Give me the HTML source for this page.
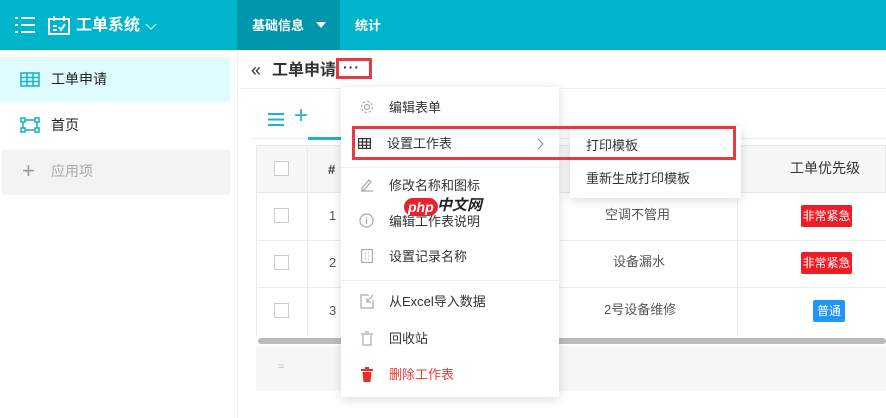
<!DOCTYPE html>
<html><head><meta charset="utf-8"><style>
*{box-sizing:border-box;margin:0;padding:0}
body{width:886px;height:418px;overflow:hidden;background:#fff;font-family:"Liberation Sans","Noto Sans CJK SC",sans-serif;font-size:13px;color:#333;position:relative;line-height:1.2}
.abs{position:absolute}
.hdr{left:0;top:0;width:886px;height:50px;background:#00b5cb}
.tab{left:237px;top:0;width:103px;height:50px;background:#0097ad}
.wt{color:#fff;font-weight:bold}
.side{left:0;top:50px;width:238px;height:368px;border-right:1px solid #eee}
.cb{width:15px;height:15px;border:1px solid #ccc;background:#fff}
.red{border:3px solid #e43a44}
</style></head><body>
<div class="abs hdr"></div>
<div class="abs tab"></div>
<svg class="abs" style="left:15px;top:17px" width="20" height="16"><g fill="#fff"><rect x="0" y="0" width="3" height="2"/><rect x="6" y="0" width="14" height="2"/><rect x="0" y="7" width="3" height="2"/><rect x="6" y="7" width="14" height="2"/><rect x="0" y="14" width="3" height="2"/><rect x="6" y="14" width="14" height="2"/></g></svg>
<svg class="abs" style="left:48px;top:16px" width="22" height="19"><g fill="none" stroke="#fff" stroke-width="2"><rect x="1" y="3" width="20" height="15"/><path d="M6 0v5M16 0v5M5 10h4M5 14h4M11 11l2 3 4-6"/></g></svg>
<div class="abs wt" style="left:76px;top:16px;font-size:16px">工单系统</div>
<svg class="abs" style="left:145px;top:23px" width="12" height="8"><path d="M1 1l5 5 5-5" fill="none" stroke="#bdeef4" stroke-width="1.2"/></svg>
<div class="abs wt" style="left:252px;top:18px;font-size:13px">基础信息</div>
<svg class="abs" style="left:316px;top:22px" width="10" height="6"><path d="M0 0h10L5 6z" fill="#fff"/></svg>
<div class="abs wt" style="left:355px;top:18px;font-size:13px">统计</div>
<div class="abs side"></div>
<div class="abs" style="left:0;top:57px;width:230px;height:45px;background:#e0fbfd"></div>
<svg class="abs" style="left:20px;top:72px" width="20" height="15"><g fill="none" stroke="#1fb5c7" stroke-width="1.6"><rect x="1" y="1" width="18" height="13"/><path d="M1 5.5h18M1 9.5h18M7 1v13M13 1v13"/></g></svg>
<div class="abs" style="left:51px;top:71px;font-size:14px;color:#222">工单申请</div>
<svg class="abs" style="left:20px;top:117px" width="20" height="16"><g fill="none" stroke="#1fb5c7" stroke-width="1.6"><rect x="3" y="3" width="14" height="10"/><rect x="1" y="1" width="4" height="4" fill="#fff"/><rect x="15" y="1" width="4" height="4" fill="#fff"/><rect x="1" y="11" width="4" height="4" fill="#fff"/><rect x="15" y="11" width="4" height="4" fill="#fff"/></g></svg>
<div class="abs" style="left:51px;top:117px;font-size:14px;color:#222">首页</div>
<div class="abs" style="left:2px;top:150px;width:228px;height:45px;background:#f3f3f3"></div>
<div class="abs" style="left:22px;top:160px;font-size:22px;color:#999;line-height:22px">+</div>
<div class="abs" style="left:51px;top:163px;font-size:14px;color:#aaa">应用项</div>
<div class="abs" style="left:239px;top:88px;width:647px;height:1px;background:#eee"></div>
<div class="abs" style="left:251px;top:60px;font-size:18px;color:#333">«</div>
<div class="abs" style="left:272px;top:61px;font-size:16px;font-weight:bold;color:#333">工单申请</div>
<div class="abs" style="left:343px;top:59px;font-size:14px;font-weight:bold;letter-spacing:1px">···</div>
<div class="abs red" style="left:336px;top:58px;width:36px;height:21px"></div>
<svg class="abs" style="left:268px;top:113px" width="16" height="13"><g fill="#1fb5c7"><rect y="0" width="16" height="2"/><rect y="5.5" width="16" height="2"/><rect y="11" width="16" height="2"/></g></svg>
<div class="abs" style="left:294px;top:104px;font-size:24px;color:#1fb5c7;line-height:24px">+</div>
<div class="abs" style="left:250px;top:138px;width:636px;height:1px;background:#eee"></div>
<div class="abs" style="left:308px;top:137px;width:35px;height:3px;background:#1fb5c7"></div>
<div class="abs" style="left:256px;top:145px;width:630px;height:48px;background:#f7f7f7;border:1px solid #e8e8e8"></div>
<div class="abs" style="left:256px;top:193px;width:630px;height:143px;border-left:1px solid #e8e8e8"></div>
<div class="abs" style="left:256px;top:240px;width:630px;height:1px;background:#ececec"></div>
<div class="abs" style="left:256px;top:287px;width:630px;height:1px;background:#ececec"></div>
<div class="abs" style="left:307px;top:145px;width:1px;height:191px;background:#ececec"></div>
<div class="abs" style="left:737px;top:145px;width:1px;height:191px;background:#ececec"></div>
<div class="abs cb" style="left:274px;top:161px"></div>
<div class="abs cb" style="left:274px;top:208px"></div>
<div class="abs cb" style="left:274px;top:255px"></div>
<div class="abs cb" style="left:274px;top:303px"></div>
<div class="abs" style="left:328px;top:162px;font-weight:bold">#</div>
<div class="abs" style="left:329px;top:208px;color:#555">1</div>
<div class="abs" style="left:329px;top:255px;color:#555">2</div>
<div class="abs" style="left:329px;top:303px;color:#555">3</div>
<div class="abs" style="left:790px;top:160px;font-size:14px;color:#333">工单优先级</div>
<div class="abs" style="left:605px;top:207px;color:#555">空调不管用</div>
<div class="abs" style="left:613px;top:254px;color:#555">设备漏水</div>
<div class="abs" style="left:604px;top:302px;color:#555">2号设备维修</div>
<div class="abs" style="left:801px;top:205px;width:51px;height:22px;background:#ee1d23;color:#fff;font-size:12px;line-height:22px;text-align:center;border-radius:2px">非常紧急</div>
<div class="abs" style="left:801px;top:252px;width:51px;height:22px;background:#ee1d23;color:#fff;font-size:12px;line-height:22px;text-align:center;border-radius:2px">非常紧急</div>
<div class="abs" style="left:813px;top:300px;width:32px;height:22px;background:#2196f3;color:#fff;font-size:12px;line-height:22px;text-align:center;border-radius:2px">普通</div>
<div class="abs" style="left:258px;top:338px;width:628px;height:6px;background:#bbb;border-radius:3px"></div>
<div class="abs" style="left:256px;top:346px;width:630px;height:45px;background:#f7f7f7"></div>
<div class="abs" style="left:278px;top:361px;color:#bbb;font-size:11px">=</div>
<div class="abs" style="left:341px;top:87px;width:218px;height:310px;background:#fff;box-shadow:0 2px 10px rgba(0,0,0,.15)"></div>
<div class="abs" style="left:341px;top:167px;width:218px;height:1px;background:#eee"></div>
<div class="abs" style="left:341px;top:280px;width:218px;height:1px;background:#eee"></div>
<svg class="abs" style="left:360px;top:100px" width="14" height="14"><g fill="none" stroke="#aaa" stroke-width="1.2"><circle cx="7" cy="7" r="2.5"/><circle cx="7" cy="7" r="5.5" stroke-dasharray="2.5 1.8"/></g></svg>
<div class="abs" style="left:389px;top:100px">编辑表单</div>
<svg class="abs" style="left:358px;top:138px" width="13" height="11"><g fill="none" stroke="#333" stroke-width="1.2"><rect x=".6" y=".6" width="11.8" height="9.8"/><path d="M0 4h13M0 7.3h13M4.5 0v11M8.5 0v11"/></g></svg>
<div class="abs" style="left:387px;top:136px">设置工作表</div>
<svg class="abs" style="left:537px;top:138px" width="7" height="12"><path d="M1 1l5 5-5 5" fill="none" stroke="#888"/></svg>
<svg class="abs" style="left:360px;top:178px" width="14" height="14"><g fill="none" stroke="#aaa" stroke-width="1.2"><path d="M2 10l7-8 2 2-7 8H2z M1 13h12"/></g></svg>
<div class="abs" style="left:389px;top:178px">修改名称和图标</div>
<svg class="abs" style="left:359px;top:213px" width="15" height="15"><g fill="none" stroke="#aaa" stroke-width="1.2"><circle cx="7.5" cy="7.5" r="6.5"/><path d="M7.5 6v5M7.5 4v1"/></g></svg>
<div class="abs" style="left:389px;top:214px">编辑工作表说明</div>
<div class="abs" style="left:404px;top:198px;font-size:14px;font-weight:bold;font-style:italic;color:#fff;background:#e8232c;border-radius:10px;padding:0 4px;line-height:18px">php</div>
<div class="abs" style="left:437px;top:197px;font-size:15px;font-weight:bold;font-style:italic;color:#222">中文网</div>
<svg class="abs" style="left:361px;top:249px" width="12" height="14"><g fill="none" stroke="#aaa" stroke-width="1.1"><rect x=".6" y=".6" width="10.8" height="12.8"/><path d="M4 4h1M7 4h1M4 7h1M7 7h1M4 10h1M7 10h1"/></g></svg>
<div class="abs" style="left:389px;top:249px">设置记录名称</div>
<svg class="abs" style="left:360px;top:294px" width="14" height="15"><g fill="none" stroke="#aaa" stroke-width="1.2"><path d="M9 1H1v13h12V6M7 8l6-7M7 4v4h4"/></g></svg>
<div class="abs" style="left:389px;top:294px">从Excel导入数据</div>
<svg class="abs" style="left:361px;top:331px" width="12" height="15"><g fill="none" stroke="#aaa" stroke-width="1.2"><path d="M2 4v10h8V4M0 3h12M4 1h4"/></g></svg>
<div class="abs" style="left:389px;top:331px">回收站</div>
<svg class="abs" style="left:361px;top:367px" width="12" height="15"><g fill="#ee2a2a"><rect x="0" y="2" width="12" height="2"/><rect x="4" y="0" width="4" height="2"/><path d="M1.5 5h9l-1 10h-7z"/></g></svg>
<div class="abs" style="left:389px;top:367px;color:#ee3b3b">删除工作表</div>
<div class="abs" style="left:570px;top:127px;width:171px;height:71px;background:#fff;box-shadow:0 2px 10px rgba(0,0,0,.15)"></div>
<div class="abs" style="left:586px;top:138px">打印模板</div>
<div class="abs" style="left:586px;top:171px">重新生成打印模板</div>
<div class="abs red" style="left:352px;top:126px;width:384px;height:34px"></div>
</body></html>
